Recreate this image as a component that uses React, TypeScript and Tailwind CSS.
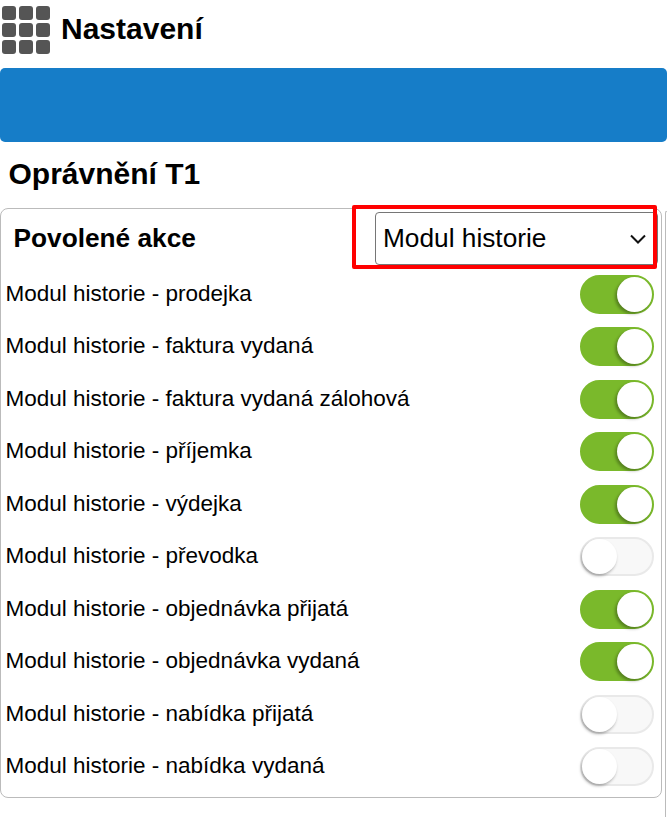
const rows = [
  { label: 'Modul historie - prodejka', on: true },
  { label: 'Modul historie - faktura vydaná', on: true },
  { label: 'Modul historie - faktura vydaná zálohová', on: true },
  { label: 'Modul historie - příjemka', on: true },
  { label: 'Modul historie - výdejka', on: true },
  { label: 'Modul historie - převodka', on: false },
  { label: 'Modul historie - objednávka přijatá', on: true },
  { label: 'Modul historie - objednávka vydaná', on: true },
  { label: 'Modul historie - nabídka přijatá', on: false },
  { label: 'Modul historie - nabídka vydaná', on: false },
];

function Toggle({ on }: { on: boolean }) {
  return (
    <div
      className={`flex h-[39px] w-[74px] items-center rounded-full border-2 ${
        on ? 'justify-end border-[#7ab92b] bg-[#7ab92b]' : 'justify-start border-[#e9e9e9] bg-[#f8f8f8]'
      }`}
    >
      <div
        className={`h-[35px] w-[35px] rounded-full bg-white ${
          on ? 'shadow-[-2px_2px_3px_rgba(0,0,0,0.3)]' : 'shadow-[-1px_2px_3px_rgba(0,0,0,0.3)]'
        }`}
      />
    </div>
  );
}

export default function App() {
  return (
    <div className="h-[817px] w-[667px] overflow-hidden bg-white font-['Liberation_Sans',Arial,sans-serif] text-black">
      <header className="flex h-[68px] items-start pl-[2px] pt-[6px]">
        <div className="grid w-[48px] grid-cols-3 gap-[3px]">
          {Array.from({ length: 9 }).map((_, i) => (
            <div key={i} className="h-[14px] rounded-[3px] bg-[#555555]" />
          ))}
        </div>
        <h1 className="ml-[11px] mt-[3px] text-[30px] leading-[40px] font-bold">Nastavení</h1>
      </header>

      <div className="h-[74px] rounded-[5px] bg-[#167dc8]" />

      <h2 className="ml-[8.5px] mt-[14px] h-[52px] text-[30px] leading-[36px] font-bold">Oprávnění T1</h2>

      <div className="flex items-stretch">
        <section className="relative h-[590px] w-[662px] rounded-[8px] border border-[#bbbbbb]">
          <div className="flex h-[57px] items-start justify-between pr-[3px] pt-[3px]">
            <h3 className="ml-[12.5px] mt-[10px] text-[26.25px] leading-[32px] font-bold">Povolené akce</h3>
            <div className="flex h-[53px] w-[283px] items-center justify-between rounded-[4px] border border-[#767676] pl-[7px] pr-[11px] text-[26.25px]">
              <span>Modul historie</span>
              <svg width="16" height="10" viewBox="0 0 16 10" fill="none" stroke="#111111" strokeWidth="2">
                <path d="M1 1.5 L8 8.5 L15 1.5" />
              </svg>
            </div>
          </div>
          <div className="absolute left-[351px] top-[-4px] h-[64px] w-[305px] rounded-[2px] border-[4px] border-[#ff0000]" />
          <ul className="flex flex-col gap-[13.5px] pl-[4.5px] pr-[7px] pt-[8.9px]">
            {rows.map((row) => (
              <li key={row.label} className="flex h-[39px] items-center justify-between text-[22.5px]">
                <span className="mb-[2px]">{row.label}</span>
                <Toggle on={row.on} />
              </li>
            ))}
          </ul>
        </section>
        <div className="ml-[3px] mt-[3px] h-[620px] w-[2px] rounded-tl-[4px] border-l border-t border-[#bbbbbb]" />
      </div>
    </div>
  );
}
